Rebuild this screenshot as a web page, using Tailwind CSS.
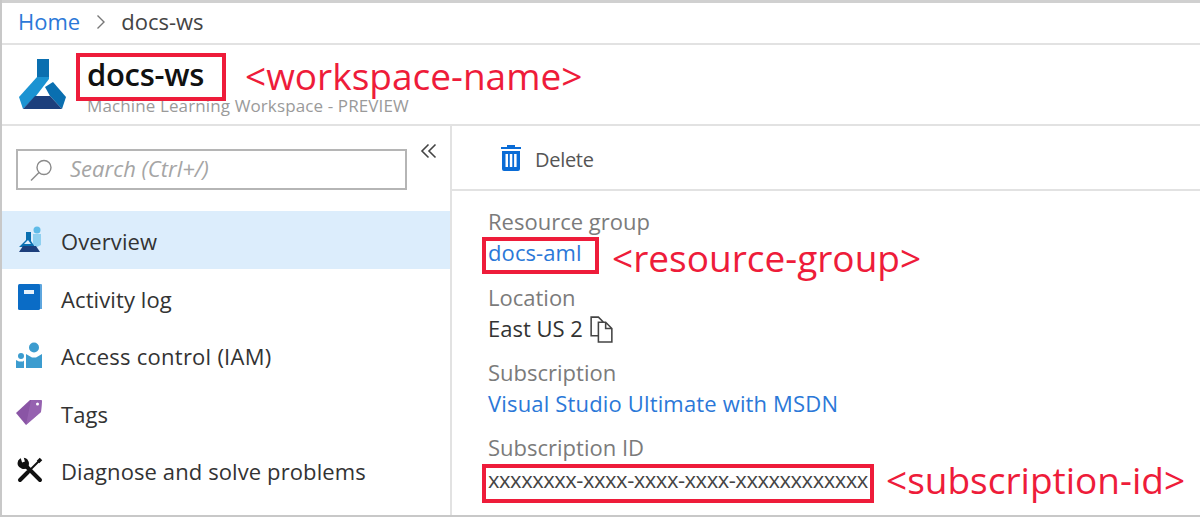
<!DOCTYPE html>
<html lang="en">
<head>
<meta charset="UTF-8">
<title>docs-ws</title>
<script src="https://cdn.jsdelivr.net/npm/@tailwindcss/browser@4"></script>
</head>
<body class="bg-white font-['Open_Sans',sans-serif] text-[#333] overflow-hidden">
<div class="relative w-[1200px] h-[517px] overflow-hidden border-l-[2px] border-b-[2px] border-[#c8c8c8] flex flex-col">

  <!-- breadcrumb -->
  <nav class="h-[45px] shrink-0 flex items-center pl-[16px] pb-[3px] text-[22px] border-b-[2px] border-[#e2e2e2] border-t-[3px] border-t-[#d0d0d0]">
    <a class="text-[#2b78d8]">Home</a>
    <svg class="ml-[16px] mr-[15px]" width="10" height="16" viewBox="0 0 10 16" fill="none" stroke="#777" stroke-width="1.4"><path d="M1.500 1.500 8 8l-6.500 6.500"/></svg>
    <span class="text-[#444]">docs-ws</span>
  </nav>

  <!-- resource header -->
  <header class="h-[81px] shrink-0 flex border-b-[2px] border-[#e2e2e2]">
    <svg class="ml-[16px] mt-[13px] shrink-0" width="50" height="52" viewBox="18 59 50 52">
      <path fill="#0a6fb0" d="M37 60h12v19H37z"/>
      <path fill="#1b93d2" d="M37 78h12v2L36 97 23 110l-4-12z"/>
      <path fill="#0a6fb0" d="M53 83l13 15-4 12-12-13-5-9z"/>
      <path fill="#1c3f7c" d="M35 97h15l12 13H23z"/>
    </svg>
    <div class="ml-[19px] pt-[9px]">
      <h1 class="text-[31px] leading-[40px] font-semibold text-[#111] tracking-[-0.3px]">docs-ws</h1>
      <p class="text-[17px] leading-[20px] mt-[2px] text-[#9a9a9a] tracking-[0.12px]">Machine Learning Workspace - PREVIEW</p>
    </div>
  </header>

  <div class="flex-1 flex min-h-0">
    <!-- sidebar -->
    <aside class="w-[450px] shrink-0 border-r-[2px] border-[#e2e2e2]">
      <div class="flex items-start pl-[14px] pt-[23px] h-[85px]">
        <div class="w-[391px] h-[41px] border-[2px] border-[#b5b5b5] flex items-center pl-[11px]">
          <svg width="24" height="24" viewBox="0 0 24 24" fill="none" stroke="#8a8a8a" stroke-width="1.4"><circle cx="15" cy="9.500" r="7"/><path d="M10 14.500 2 22.500"/></svg>
          <span class="ml-[17px] mt-[-3px] text-[22px] italic text-[#a5a5a5]">Search (Ctrl+/)</span>
        </div>
        <svg class="ml-[13px] mt-[-6px]" width="18" height="16" viewBox="0 0 18 16" fill="none" stroke="#444" stroke-width="1.6"><path d="M8.500 1.500 2 8l6.500 6.500M15.500 1.500 9 8l6.500 6.500"/></svg>
      </div>
      <ul class="text-[22px] tracking-[0.1px] text-[#333]">
        <li class="h-[58px] flex items-center bg-[#dcedfc]">
          <svg class="ml-[15px] mr-[18px] mt-[-2px]" width="26" height="28" viewBox="0 0 26 28">
            <circle cx="20" cy="5" r="3.500" fill="#5fbbe8"/>
            <path fill="#8fd0f0" d="M16 9h8v11l-4 2-4-2z"/>
            <path fill="#0a6fb0" d="M9 7h5v9l4 6H2l7-7z"/>
            <path fill="#dcedfc" d="M11 15l3 4H7z"/>
            <path fill="#1c3f7c" d="M6 21h13l4 6H2z"/>
          </svg>
          <span class="mt-[3px]">Overview</span>
        </li>
        <li class="h-[58px] flex items-center">
          <svg class="ml-[15px] mr-[18px] mt-[-2px]" width="26" height="28" viewBox="0 0 26 28">
            <path fill="#5ea6de" d="M3 1h21a1 1 0 0 1 1 1v24h-3z"/>
            <rect x="1" y="1" width="22" height="26" rx="1.500" fill="#0a6cc6"/>
            <rect x="7" y="7" width="10" height="4" fill="#e6f1fb"/>
          </svg>
          <span class="mt-[3px]">Activity log</span>
        </li>
        <li class="h-[57px] flex items-center">
          <svg class="ml-[13px] mr-[18px] mt-[-2px]" width="28" height="28" viewBox="0 0 28 28">
            <circle cx="19" cy="6.500" r="5" fill="#3c9ccf"/>
            <path fill="#3c9ccf" d="M11 13l6 3.500h4L27 13v14H11z"/>
            <circle cx="6" cy="15" r="3" fill="#3c9ccf"/>
            <path fill="#3c9ccf" d="M1 19l3 1.500h4l1-1V27H1z"/>
          </svg>
          <span class="mt-[2px] tracking-[0.25px]">Access control (IAM)</span>
        </li>
        <li class="h-[58px] flex items-center">
          <svg class="ml-[13px] mr-[18px] mt-[-2px]" width="28" height="28" viewBox="0 0 28 28">
            <path fill="#8a55a5" d="M1 15 15 2h11a1.500 1.500 0 0 1 1 1l-1 11-15 13z"/>
            <path fill="#a06dba" d="M16 2h10a1 1 0 0 1 1 1l-1 11-15 13z" opacity=".55"/>
            <circle cx="22.500" cy="6" r="1.500" fill="#fff"/>
          </svg>
          <span class="mt-[3px]">Tags</span>
        </li>
        <li class="h-[57px] flex items-center">
          <svg class="ml-[15px] mr-[18px] mt-[-2px]" width="26" height="26" viewBox="0 0 26 26" fill="none" stroke="#111">
            <path stroke-width="4" stroke-linecap="round" d="M9 9l14 14"/>
            <path stroke-width="3.500" d="M9 3.500C5.500 1 1.500 3.500 2.500 7.500 3.500 10 7 11 9.500 9.500 10.500 7.500 10.500 5.500 9 3.500z" fill="#111"/>
            <path stroke-width="3" stroke="#fff" d="M5 0l1.500 5"/>
            <path stroke-width="4" stroke-linecap="round" d="M11 15l-8 8"/>
            <path stroke-width="2" d="M11 15 22 4"/>
            <path stroke-width="3.500" d="M21 5l3-3"/>
          </svg>
          <span class="mt-[2px]">Diagnose and solve problems</span>
        </li>
      </ul>
    </aside>

    <!-- details -->
    <main class="flex-1">
      <div class="h-[65px] flex items-center pl-[48px] border-b-[2px] border-[#e2e2e2]">
        <svg width="22" height="26" viewBox="0 0 22 26" fill="#0a6cd6">
          <path d="M7 0h8v2h6v2H1V2h6zM2 6h18v18a2 2 0 0 1-2 2H4a2 2 0 0 1-2-2zm3.500 3v13h2.500V9zm4.300 0v13h2.500V9zm4.300 0v13h2.500V9z"/>
        </svg>
        <span class="ml-[13px] text-[20px] text-[#555] tracking-[-0.3px] mt-[4px]">Delete</span>
      </div>
      <dl class="pl-[36px] pt-[15px] text-[22px] leading-[31px]">
        <dt class="text-[#7b7b7b]">Resource group</dt>
        <dd class="text-[#2b78d8] tracking-[0.1px]">docs-aml</dd>
        <dt class="text-[#7b7b7b] mt-[14px]">Location</dt>
        <dd class="flex items-center text-[#333]">East US 2
          <svg class="ml-[6px]" width="25" height="29" viewBox="0 0 24 28" fill="none" stroke="#444" stroke-width="1.500"><path d="M9 21H2V3h7l5 5M9 8h7l6 6v13H9zM16 8v6h6"/></svg>
        </dd>
        <dt class="text-[#7b7b7b] mt-[13px]">Subscription</dt>
        <dd class="text-[#2b78d8] tracking-[0.16px]">Visual Studio Ultimate with MSDN</dd>
        <dt class="text-[#7b7b7b] mt-[13px]">Subscription ID</dt>
        <dd class="text-[#444] mt-[1px] tracking-[-0.47px]">xxxxxxxx-xxxx-xxxx-xxxx-xxxxxxxxxxxx</dd>
      </dl>
    </main>
  </div>

  <!-- red annotations over the screenshot -->
  <div class="absolute left-[74px] top-[53px] w-[150px] h-[48px] border-[4px] border-[#ee1c3a]"></div>
  <span class="absolute left-[243px] top-[56px] text-[37px] leading-[40px] text-[#ee1c3a]">&lt;workspace-name&gt;</span>
  <div class="absolute left-[480px] top-[237px] w-[117px] h-[37px] border-[4px] border-[#ee1c3a]"></div>
  <span class="absolute left-[610px] top-[238px] text-[37px] leading-[40px] text-[#ee1c3a]">&lt;resource-group&gt;</span>
  <div class="absolute left-[480px] top-[464px] w-[392px] h-[39px] border-[4px] border-[#ee1c3a]"></div>
  <span class="absolute left-[884px] top-[460px] text-[37px] leading-[40px] text-[#ee1c3a]">&lt;subscription-id&gt;</span>
</div>
</body>
</html>
